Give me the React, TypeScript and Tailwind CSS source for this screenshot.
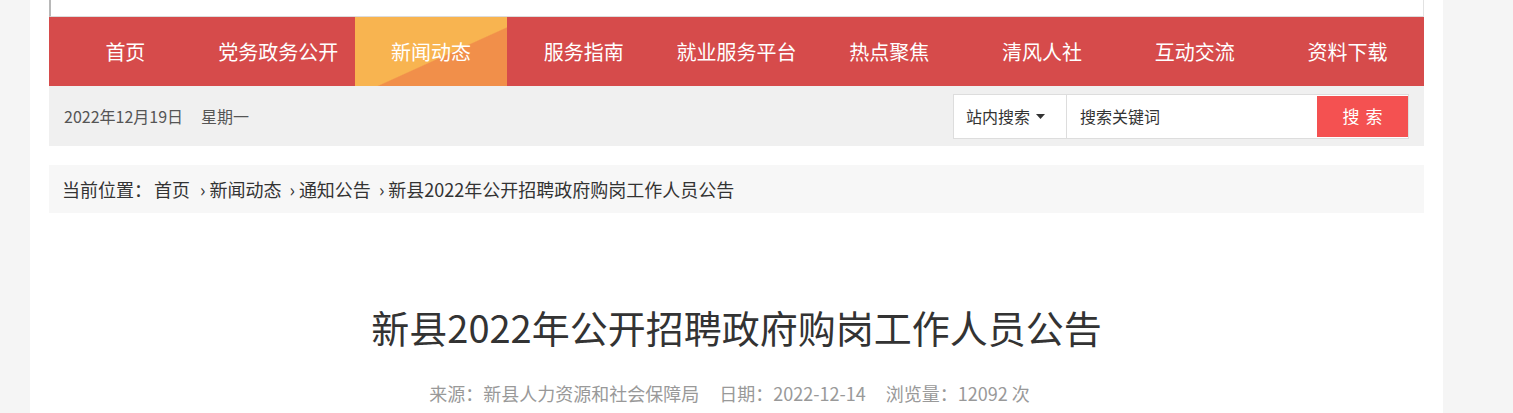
import React from 'react';

const navItems = ['首页', '党务政务公开', '新闻动态', '服务指南', '就业服务平台', '热点聚焦', '清风人社', '互动交流', '资料下载'];

const crumbs = ['新闻动态', '通知公告', '新县2022年公开招聘政府购岗工作人员公告'];

export default function App() {
  return (
    <div className="min-h-screen bg-[#f5f5f5] font-['Noto_Sans_CJK_SC','Noto_Sans',sans-serif]">
      <div className="ml-[30px] w-[1413px] min-h-[413px] bg-white">
        <div className="mx-[19px]">
          {/* top box (cut off) */}
          <div className="h-[17px] border-l-2 border-r border-b border-l-[#b8b8b8] border-r-[#e2e2e2] border-b-[#dcdcdc] bg-white"></div>

          {/* Main navigation */}
          <nav className="grid grid-cols-9 h-[69px] bg-[#d64b4b]">
            {navItems.map((item, index) => (
              <a
                key={item}
                href="#"
                className={`flex items-center justify-center text-[20px] text-white ${
                  index === 2 ? 'bg-[linear-gradient(to_bottom_right,#f8b450_57%,#f18f4a_58%)]' : ''
                }`}
              >
                {item}
              </a>
            ))}
          </nav>

          {/* Date + search */}
          <div className="flex items-center justify-between h-[60px] bg-[#f0f0f0] px-[15px]">
            <div className="text-[16px] text-[#555] flex gap-[18px]">
              <span>2022年12月19日</span>
              <span>星期一</span>
            </div>
            <div className="flex h-[45px] border border-[#dddddd] bg-white">
              <div className="flex items-center w-[113px] pl-[12px] gap-[6px] border-r border-[#dddddd] text-[16px] text-[#333]">
                站内搜索
                <svg width="9" height="5" viewBox="0 0 9 5">
                  <path d="M0 0h9L4.5 5z" fill="#333" />
                </svg>
              </div>
              <div className="flex items-center w-[250px] pl-[13px] text-[16px] text-[#333]">搜索关键词</div>
              <button className="w-[91px] my-px bg-[#f45151] text-white text-[17px] tracking-[6px] pl-[6px]">搜索</button>
            </div>
          </div>

          {/* Breadcrumb */}
          <div className="mt-[19px] h-[48px] bg-[#f7f7f7] flex items-center pl-[13px] text-[18px] text-[#333]">
            <span>当前位置：</span>
            <span className="ml-[2px] mr-[10px]">首页</span>
            {crumbs.map((c) => (
              <span key={c} className="mr-[8px]">
                <span className="mr-[4px]">›</span>
                {c}
              </span>
            ))}
          </div>

          {/* Article header */}
          <h1 className="mt-[95px] text-center text-[38px] leading-none text-[#333] font-normal">
            新县2022年公开招聘政府购岗工作人员公告
          </h1>
          <div className="mt-[38px] flex justify-center gap-[20px] pr-[14px] text-[18px] leading-none text-[#999]">
            <span>来源：新县人力资源和社会保障局</span>
            <span>日期：2022-12-14</span>
            <span>浏览量：12092 次</span>
          </div>
        </div>
      </div>
    </div>
  );
}
